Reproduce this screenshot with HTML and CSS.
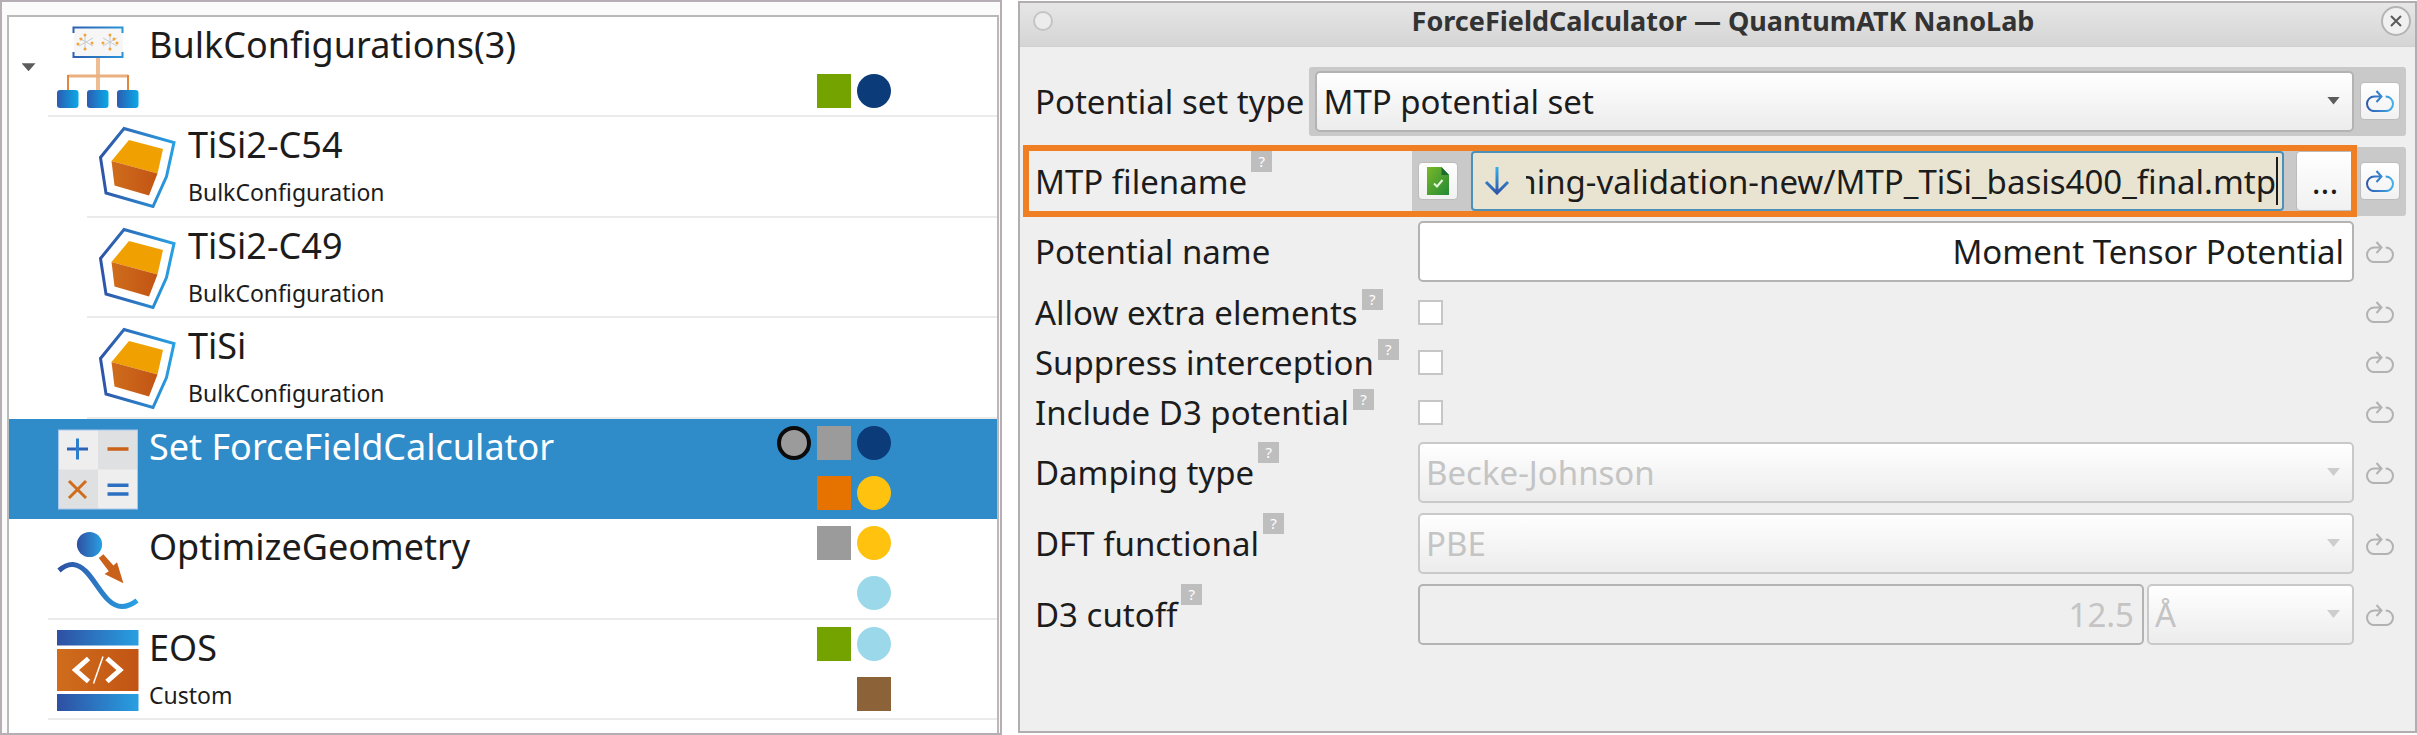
FILE: index.html
```html
<!DOCTYPE html>
<html lang="en">
<head>
    <meta charset="UTF-8">
    <meta name="viewport" content="width=device-width, initial-scale=1.0">
    <title>ForceFieldCalculator — QuantumATK NanoLab</title>
    <link rel="stylesheet" href="styles.css">
</head>
<body>
    <!-- shared icons -->
    <svg class="defs" width="0" height="0" aria-hidden="true">
      <defs>
        <linearGradient id="blue" x1="0" y1="0" x2="1" y2="0">
          <stop offset="0" stop-color="#2c5bb0"/>
          <stop offset="1" stop-color="#0aaae8"/>
        </linearGradient>
        <linearGradient id="line" gradientUnits="userSpaceOnUse" x1="0" y1="0" x2="82" y2="0">
          <stop offset="0" stop-color="#2f4fa2"/>
          <stop offset="1" stop-color="#28a4e6"/>
        </linearGradient>
        <linearGradient id="bar" x1="0" y1="0" x2="1" y2="0">
          <stop offset="0" stop-color="#2f4fa2"/>
          <stop offset="1" stop-color="#28a0e2"/>
        </linearGradient>
        <linearGradient id="rust" x1="0" y1="0" x2="1" y2="0">
          <stop offset="0" stop-color="#cf6d1c"/>
          <stop offset="1" stop-color="#c25414"/>
        </linearGradient>
        <linearGradient id="loop" gradientUnits="userSpaceOnUse" x1="0" y1="0" x2="28" y2="0">
          <stop offset="0" stop-color="#2f55ab"/>
          <stop offset="1" stop-color="#3fb4ee"/>
        </linearGradient>
        <linearGradient id="down" gradientUnits="userSpaceOnUse" x1="0" y1="0" x2="0" y2="28">
          <stop offset="0" stop-color="#35b0ec"/>
          <stop offset="1" stop-color="#2f4fa2"/>
        </linearGradient>
        <linearGradient id="leaf" x1="0" y1="0" x2="1" y2="1">
          <stop offset="0" stop-color="#7ab829"/>
          <stop offset="1" stop-color="#238a35"/>
        </linearGradient>
      </defs>
      <symbol id="cube" viewBox="0 0 82 82">
        <path d="M28 2.5 78 16.5 70.500 50.500 57 80.500 10 67 4.500 31.500Z" fill="#fff" stroke="url(#line)" stroke-width="3"/>
        <path d="M33 14 67 23 61.500 47.500 15.500 35Z" fill="#f0a000"/>
        <path d="M15.500 35 61.500 47.500 53 69.500 18.500 59.500Z" fill="url(#rust)"/>
      </symbol>
      <symbol id="reset" viewBox="0 0 28 22">
        <path d="M15.500 6.500H8.300a7.300 7.300 0 0 0 0 14.600h11.400a7.300 7.300 0 0 0 0-14.600M10.500 1l5 5.500-5 5.500"/>
      </symbol>
    </svg>

    <div class="app">
      <section class="workflow">
        <ul class="tree">
          <li class="node">
            <button class="expander" type="button" aria-label="Collapse"></button>
            <div class="node-body">
              <svg class="node-icon" viewBox="0 0 82 82">
                <rect x="17" y="2" width="49" height="29" fill="#f6f6f6"/>
                <path d="M16.500 7V1.500h49V7M16.500 26v5h49v-5" fill="none" stroke="url(#line)" stroke-width="2"/>
                <g stroke="#c9ccd2" stroke-width="1"><path d="M22 12l14 8M22 20l14-8M28 9v14M46 12l14 8M46 20l14-8M53 9v14"/></g>
                <g fill="#f0a43a"><circle cx="28" cy="9" r="1.500"/><circle cx="28" cy="23" r="1.500"/><circle cx="21" cy="18" r="1.500"/><circle cx="35" cy="17" r="1.500"/><circle cx="24" cy="13" r="1.500"/><circle cx="53" cy="9" r="1.500"/><circle cx="53" cy="23" r="1.500"/><circle cx="46" cy="17" r="1.500"/><circle cx="60" cy="17" r="1.500"/><circle cx="57" cy="13" r="1.500"/></g>
                <path d="M41 32v33" stroke="#efbd93" stroke-width="4"/>
                <path d="M11 50h60" stroke="#ecaf7f" stroke-width="3"/>
                <path d="M11 49v16M71 49v16" stroke="#e0883f" stroke-width="2"/>
                <rect x="0" y="64" width="21.500" height="18" rx="3" fill="url(#blue)"/>
                <rect x="30" y="64" width="21.500" height="18" rx="3" fill="url(#blue)"/>
                <rect x="60" y="64" width="21.500" height="18" rx="3" fill="url(#blue)"/>
              </svg>
              <div class="node-text">
                <div class="node-name">BulkConfigurations(3)</div>
              </div>
              <div class="markers">
                <div class="marker-row"></div>
                <div class="marker-row"><i class="mark green"></i><i class="mark round navy"></i></div>
              </div>
            </div>
          </li>
          <li class="node child">
            <div class="node-body">
              <svg class="node-icon"><use href="#cube"/></svg>
              <div class="node-text">
                <div class="node-name">TiSi2-C54</div>
                <div class="node-type">BulkConfiguration</div>
              </div>
            </div>
          </li>
          <li class="node child">
            <div class="node-body">
              <svg class="node-icon"><use href="#cube"/></svg>
              <div class="node-text">
                <div class="node-name">TiSi2-C49</div>
                <div class="node-type">BulkConfiguration</div>
              </div>
            </div>
          </li>
          <li class="node child">
            <div class="node-body">
              <svg class="node-icon"><use href="#cube"/></svg>
              <div class="node-text">
                <div class="node-name">TiSi</div>
                <div class="node-type">BulkConfiguration</div>
              </div>
            </div>
          </li>
          <li class="node leaf selected">
            <div class="node-body">
              <svg class="node-icon" viewBox="0 0 82 82">
                <rect x="1.500" y="2" width="79" height="79" fill="#eeeeee"/>
                <path d="M41 2h39.500v39.500H41zM1.500 41.500H41V81H1.500z" fill="#dfe0e2"/>
                <rect x="1.500" y="2" width="79" height="79" fill="none" stroke="#a9c6ee" stroke-width="1"/>
                <path d="M10 21h21" stroke="#2c62b8" stroke-width="3"/>
                <path d="M20.500 10.500v21" stroke="#2d7fce" stroke-width="3"/>
                <path d="M50.500 21h21" stroke="#cb6218" stroke-width="3.500"/>
                <path d="M12 53l17 17M29 53L12 70" stroke="#cf6d1c" stroke-width="3"/>
                <path d="M50.500 57.200h21M50.500 66h21" stroke="#2c70c2" stroke-width="3.500"/>
              </svg>
              <div class="node-text">
                <div class="node-name">Set ForceFieldCalculator</div>
              </div>
              <div class="markers">
                <div class="marker-row"><i class="mark round ring"></i><i class="mark gray"></i><i class="mark round navy"></i></div>
                <div class="marker-row"><i class="mark orange"></i><i class="mark round yellow"></i></div>
              </div>
            </div>
          </li>
          <li class="node leaf">
            <div class="node-body">
              <svg class="node-icon" viewBox="0 0 82 82">
                <circle cx="32.500" cy="16.500" r="12.600" fill="url(#bar)"/>
                <path d="M41.800 30l4.600-3.700 10 11.300 3.600-3.300 6.400 21L47.500 46l4.300-2.700z" fill="#c9611a"/>
                <path d="M2 42.500C6 39 10 36 16 36.500 36 38 44 78 65 78.500c5 0 10-2 15-6" fill="none" stroke="url(#line)" stroke-width="5"/>
              </svg>
              <div class="node-text">
                <div class="node-name">OptimizeGeometry</div>
              </div>
              <div class="markers">
                <div class="marker-row"><i class="mark gray"></i><i class="mark round yellow"></i></div>
                <div class="marker-row"><i class="mark round sky"></i></div>
              </div>
            </div>
          </li>
          <li class="node leaf">
            <div class="node-body">
              <svg class="node-icon" viewBox="0 0 82 82">
                <path d="M0 1h81.500v15.500H0zM0 65h81.500v17H0z" fill="url(#bar)"/>
                <path d="M0 20h81.500v42H0z" fill="url(#rust)"/>
                <path d="M31.500 29.500 18.500 41 31.500 52.500M50 29.500 63 41 50 52.500" fill="none" stroke="#fff" stroke-width="5"/>
                <path d="M46 27.500 36.500 54.500" stroke="#fff" stroke-width="1.500"/>
              </svg>
              <div class="node-text">
                <div class="node-name">EOS</div>
                <div class="node-type">Custom</div>
              </div>
              <div class="markers">
                <div class="marker-row"><i class="mark green"></i><i class="mark round sky"></i></div>
                <div class="marker-row"><i class="mark brown"></i></div>
              </div>
            </div>
          </li>
        </ul>
      </section>

      <section class="dialog">
        <header class="titlebar">
          <button class="menu-dot" type="button" aria-label="Window menu"></button>
          <h1>ForceFieldCalculator — QuantumATK NanoLab</h1>
          <button class="close" type="button" aria-label="Close">
            <svg viewBox="0 0 12 12"><path d="M1 1l10 10M11 1L1 11"/></svg>
          </button>
        </header>

        <form class="form">
          <div class="row first">
            <label for="set-type">Potential set type</label>
            <div class="group changed">
              <div class="select">
                <select id="set-type"><option>MTP potential set</option></select>
              </div>
              <button class="reset" type="button" aria-label="Reset"><svg><use href="#reset"/></svg></button>
            </div>
          </div>

          <div class="row file highlight">
            <label for="filename">MTP filename<span class="help">?</span></label>
            <div class="group changed">
              <button class="file-ok" type="button" aria-label="File status">
                <svg viewBox="0 0 22 28">
                  <path d="M0 0h14.500L22 8v20H0z" fill="url(#leaf)"/>
                  <path d="M14.500 0 22 8h-7.500z" fill="#1d6b34"/>
                  <path d="M7 16.500l3 3 5.500-6.500" fill="none" stroke="#e4f5dc" stroke-width="2"/>
                </svg>
              </button>
              <div class="filename">
                <svg viewBox="0 0 26 28"><path d="M13 0v26M2 15l11 11 11-11" fill="none" stroke="url(#down)" stroke-width="3"/></svg>
                <input id="filename" type="text" dir="rtl" value="ning-validation-new/MTP_TiSi_basis400_final.mtp">
                <span class="caret"></span>
              </div>
              <button class="browse" type="button">...</button>
              <button class="reset" type="button" aria-label="Reset"><svg><use href="#reset"/></svg></button>
            </div>
          </div>

          <div class="row name">
            <label for="name">Potential name</label>
            <div class="group">
              <input class="text" id="name" type="text" value="Moment Tensor Potential">
              <button class="reset" type="button" aria-label="Reset" disabled><svg><use href="#reset"/></svg></button>
            </div>
          </div>

          <div class="row check">
            <label for="extra">Allow extra elements<span class="help">?</span></label>
            <div class="group">
              <input id="extra" type="checkbox">
              <button class="reset" type="button" aria-label="Reset" disabled><svg><use href="#reset"/></svg></button>
            </div>
          </div>
          <div class="row check">
            <label for="suppress">Suppress interception<span class="help">?</span></label>
            <div class="group">
              <input id="suppress" type="checkbox">
              <button class="reset" type="button" aria-label="Reset" disabled><svg><use href="#reset"/></svg></button>
            </div>
          </div>
          <div class="row check">
            <label for="include">Include D3 potential<span class="help">?</span></label>
            <div class="group">
              <input id="include" type="checkbox">
              <button class="reset" type="button" aria-label="Reset" disabled><svg><use href="#reset"/></svg></button>
            </div>
          </div>

          <div class="row">
            <label for="damping">Damping type<span class="help">?</span></label>
            <div class="group">
              <div class="select">
                <select id="damping" disabled><option>Becke-Johnson</option></select>
              </div>
              <button class="reset" type="button" aria-label="Reset" disabled><svg><use href="#reset"/></svg></button>
            </div>
          </div>
          <div class="row">
            <label for="dft">DFT functional<span class="help">?</span></label>
            <div class="group">
              <div class="select">
                <select id="dft" disabled><option>PBE</option></select>
              </div>
              <button class="reset" type="button" aria-label="Reset" disabled><svg><use href="#reset"/></svg></button>
            </div>
          </div>
          <div class="row">
            <label for="cutoff">D3 cutoff<span class="help">?</span></label>
            <div class="group">
              <div class="cutoff">
                <input class="text" id="cutoff" type="text" value="12.5" disabled>
                <div class="select unit">
                  <select aria-label="Cutoff unit" disabled><option>Å</option></select>
                </div>
              </div>
              <button class="reset" type="button" aria-label="Reset" disabled><svg><use href="#reset"/></svg></button>
            </div>
          </div>
        </form>
      </section>
    </div>
</body>
</html>
```
FILE: styles.css
```css
*,
*::before,
*::after {
  margin: 0;
  padding: 0;
  box-sizing: border-box;
}

body {
  font-family: "Noto Sans", "Open Sans", sans-serif;
  color: #1c1c1c;
  background-color: #ffffff;
}

button,
input,
select {
  font: inherit;
  color: inherit;
}

.defs {
  position: absolute;
}

.app {
  display: grid;
  grid-template-columns: 1002fr 1399fr;
  gap: 16px;
  min-height: 100vh;
}

/* workflow tree */
.workflow {
  display: flex;
  border: 2px solid #b5afb5;
  padding: 13px 1px 0 5px;
  background-color: #fbfbfb;
}

.tree {
  flex: 1;
  display: flex;
  flex-direction: column;
  list-style: none;
  padding-bottom: 13px;
  border: 2px solid #b9b9b9;
  border-bottom: none;
  background-color: #ffffff;
}

.node {
  flex: 1;
  display: flex;
}

.leaf {
  padding-left: 39px;
}

.child {
  padding-left: 78px;
}

.expander {
  width: 39px;
  border: none;
  background: none;
}

.expander::after {
  content: "";
  display: block;
  width: 14px;
  height: 8px;
  margin: 0 auto;
  background-color: #5c5c5c;
  clip-path: polygon(0 0, 100% 0, 50% 100%);
}

.node-body {
  flex: 1;
  display: flex;
  gap: 10px;
  padding-left: 9px;
  padding-right: 106px;
  border-bottom: 2px solid #ebebeb;
}

.node-icon {
  width: 82px;
  height: 82px;
  margin-top: 9px;
}

.node-text {
  flex: 1;
  padding-top: 4px;
}

.node-name {
  font-size: 36px;
  line-height: 48px;
}

.node-type {
  margin-top: 7px;
  font-size: 23px;
  line-height: 32px;
}

.selected {
  background-color: #308cc8;
  color: #ffffff;
}

.selected .node-body {
  border-color: #308cc8;
}

.markers {
  display: flex;
  flex-direction: column;
  gap: 16px;
  padding-top: 7px;
}

.marker-row {
  display: flex;
  justify-content: flex-end;
  gap: 6px;
  height: 34px;
}

.mark {
  width: 34px;
  height: 34px;
}

.round {
  border-radius: 50%;
}

.ring {
  background-color: #9b9b9b;
  border: 4px solid #0b0b0b;
}

.green { background-color: #74a300; }
.navy { background-color: #0b3b78; }
.gray { background-color: #9b9b9b; }
.orange { background-color: #e67300; }
.yellow { background-color: #ffc20f; }
.sky { background-color: #9bd9ea; }
.brown { background-color: #8c6239; }

/* dialog window */
.dialog {
  display: flex;
  flex-direction: column;
  margin: 1px 0 2px;
  border: 2px solid #b1adb1;
  background-color: #efefef;
}

.titlebar {
  display: flex;
  align-items: center;
  height: 44px;
  padding: 0 4px 8px 13px;
  background: linear-gradient(#e6e6e6, #d5d5d5);
  border-bottom: 1px solid #d0d0d0;
}

.titlebar h1 {
  flex: 1;
  padding-left: 12px;
  font-size: 27px;
  line-height: 32px;
  text-align: center;
  color: #333333;
}

.menu-dot {
  width: 20px;
  height: 20px;
  border: 2px solid #c4c4c4;
  border-radius: 50%;
  background-color: #ececec;
}

.close {
  display: flex;
  align-items: center;
  justify-content: center;
  width: 30px;
  height: 30px;
  border: 2px solid #b4b4b4;
  border-radius: 50%;
  background-color: #f0f0f0;
}

.close svg {
  width: 12px;
  height: 12px;
  stroke: #5a5a5a;
  stroke-width: 2;
}

.form {
  padding: 14px 9px 0 15px;
  font-size: 33px;
}

.row {
  display: flex;
  align-items: center;
  height: 71px;
}

.row label {
  display: flex;
  align-items: center;
  gap: 4px;
  width: 383px;
  height: 61px;
  white-space: nowrap;
}

.row.first,
.row.file {
  height: 80px;
}

.row.first label {
  width: auto;
  margin-right: 5px;
}

.row.file label {
  width: 377px;
}

.row.name {
  height: 66px;
  align-items: flex-start;
}

.row.check {
  height: 50px;
}

.row.check label {
  height: 46px;
}

.help {
  align-self: flex-start;
  width: 21px;
  height: 21px;
  background-color: #bebebe;
  color: #ffffff;
  font-size: 15px;
  line-height: 21px;
  text-align: center;
}

.group {
  flex: 1;
  display: flex;
  align-items: center;
  justify-content: space-between;
  gap: 6px;
  padding-right: 6px;
}

.changed {
  height: 69px;
  padding-left: 6px;
  border-radius: 3px;
  background-color: #c9c9c9;
}

.select {
  flex: 1;
  position: relative;
}

.select select {
  display: block;
  appearance: none;
  width: 100%;
  height: 61px;
  padding: 0 6px;
  border: 2px solid #b3b3b3;
  border-radius: 5px;
  background: linear-gradient(#ffffff, #ececec);
}

.select::after {
  content: "";
  position: absolute;
  top: 26px;
  right: 14px;
  width: 13px;
  height: 8px;
  background-color: #5c5c5c;
  clip-path: polygon(0 0, 100% 0, 50% 100%);
}

.select select:disabled {
  border-color: #c9c9c9;
  color: #c4c4c4;
  opacity: 1;
}

.select:has(select:disabled)::after {
  background-color: #cdcdcd;
}

.text {
  flex: 1;
  min-width: 0;
  height: 61px;
  padding: 0 8px;
  border: 2px solid #b3b3b3;
  border-radius: 5px;
  background-color: #ffffff;
  text-align: right;
}

.text:disabled {
  background-color: #efefef;
  color: #c4c4c4;
}

.cutoff {
  flex: 1;
  display: flex;
  gap: 3px;
}

.unit {
  flex: 0 0 207px;
}

input[type="checkbox"] {
  appearance: none;
  width: 25px;
  height: 25px;
  border: 2px solid #c6c6c6;
  background-color: #ffffff;
}

.reset {
  display: flex;
  align-items: center;
  justify-content: center;
  width: 40px;
  height: 38px;
  border: 1px solid #bcbcbc;
  border-radius: 4px;
  background: linear-gradient(#ffffff, #f1f1f1);
}

.reset svg {
  width: 28px;
  height: 22px;
  fill: none;
  stroke: url(#loop);
  stroke-width: 2;
}

.reset:disabled {
  border-color: transparent;
  background: none;
}

.reset:disabled svg {
  stroke: #b2b2b2;
}

/* file row */
.highlight {
  position: relative;
}

.highlight::after {
  content: "";
  position: absolute;
  top: 4px;
  left: -12px;
  right: 49px;
  height: 72px;
  border: 6px solid #ef7f22;
  pointer-events: none;
}

.file-ok {
  display: flex;
  align-items: center;
  justify-content: center;
  width: 40px;
  height: 38px;
  margin-right: 7px;
  border: 1px solid #bcbcbc;
  border-radius: 4px;
  background: linear-gradient(#ffffff, #f1f1f1);
}

.file-ok svg {
  width: 22px;
  height: 28px;
}

.filename {
  flex: 1;
  display: flex;
  align-items: center;
  height: 60px;
  margin-right: 6px;
  padding: 0 4px 0 11px;
  border: 2px solid #4a90b8;
  border-radius: 4px;
  background-color: #e9e4d2;
}

.filename svg {
  width: 26px;
  height: 28px;
}

.filename input {
  flex: 1;
  min-width: 0;
  margin-left: 16px;
  border: none;
  outline: none;
  background: none;
}

.caret {
  width: 2px;
  height: 48px;
  background-color: #1c1c1c;
}

.browse {
  width: 58px;
  height: 60px;
  border: 1px solid #bcbcbc;
  border-radius: 4px;
  background: linear-gradient(#ffffff, #f1f1f1);
}
```
